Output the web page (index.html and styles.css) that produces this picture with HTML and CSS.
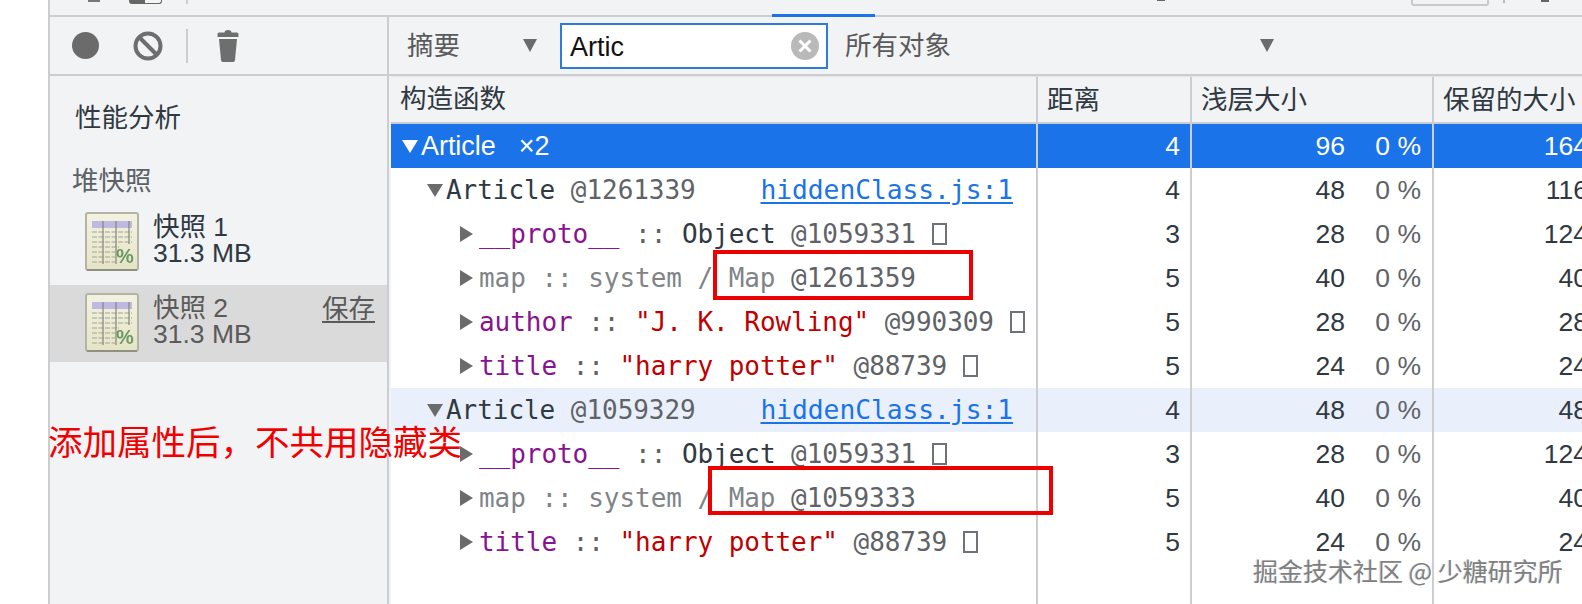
FILE: index.html
```html
<!DOCTYPE html>
<html lang="zh">
<head>
<meta charset="utf-8">
<title>堆快照</title>
<link rel="stylesheet" href="styles.css">
</head>
<body>
<svg class="defs" width="0" height="0" aria-hidden="true">
  <defs>
    <linearGradient id="paper" x1="0" y1="0" x2="0" y2="1">
      <stop offset="0" stop-color="#f3f2e2"/>
      <stop offset="1" stop-color="#e6e4c6"/>
    </linearGradient>
    <symbol id="snap" viewBox="0 0 54 60">
      <rect x="1" y="1" width="52" height="57" rx="2" fill="url(#paper)" stroke="#b4b4a6" stroke-width="2"/>
      <path d="M2 58H52" stroke="#8f8f82" stroke-width="2"/>
      <rect x="7" y="9" width="40" height="7" fill="#bdb9e2"/>
      <g stroke="#a3a394" stroke-width="1" stroke-dasharray="5 1.500">
        <path d="M7 20H47M7 25H47M7 30H47M7 35H34M7 40H30M7 45H30M7 50H30"/>
      </g>
      <g stroke="#85857a" stroke-width="1.200">
        <path d="M18 9V52M31 9V52M44 9V32"/>
      </g>
      <text x="40" y="51" class="pct" text-anchor="middle">%</text>
    </symbol>
  </defs>
</svg>
<div class="app">
  <div class="topstrip">
    <span class="frag frag-a"></span>
    <span class="frag frag-b"></span>
    <span class="frag frag-c"></span>
    <span class="frag frag-tab"></span>
    <span class="frag frag-d"></span>
    <span class="frag frag-e"></span>
    <span class="frag frag-f"></span>
    <span class="frag frag-g"></span>
  </div>
  <div class="workspace">
    <aside class="sidebar">
      <div class="side-tools">
        <span class="record"></span>
        <svg class="ban" viewBox="0 0 30 30" width="30" height="30"><circle cx="15" cy="15" r="12.5" fill="none" stroke="#6e6e6e" stroke-width="4"/><path d="M6.5 6.5L23.5 23.5" stroke="#6e6e6e" stroke-width="4"/></svg>
        <span class="tool-sep"></span>
        <svg class="trash" viewBox="0 0 22 32" width="22" height="32"><path d="M7.5 2.5a3.5 2.5 0 0 1 7 0H20a1.5 2 0 0 1 1.500 2V7H.5V4.500A1.500 2 0 0 1 2 2.500z" fill="#6e6e6e"/><path d="M2 9H20L18 30a2 2 0 0 1-2 2H6a2 2 0 0 1-2-2z" fill="#6e6e6e"/></svg>
      </div>
      <div class="side-title">性能分析</div>
      <div class="side-group">堆快照</div>
      <div class="snapshot">
        <svg class="snap-icon"><use href="#snap"/></svg>
        <div class="snap-text"><div>快照 1</div><div>31.3 MB</div></div>
      </div>
      <div class="snapshot selected">
        <svg class="snap-icon"><use href="#snap"/></svg>
        <div class="snap-text"><div>快照 2</div><div>31.3 MB</div></div>
        <span class="save">保存</span>
      </div>
    </aside>
    <main class="content">
      <div class="filters">
        <span class="select-label">摘要</span>
        <span class="caret caret-a"></span>
        <div class="search">
          <span>Artic</span>
          <svg class="clear" viewBox="0 0 28 28" width="28" height="28"><circle cx="14" cy="14" r="14" fill="#b9b9b9"/><path d="M8.500 8.500L19.500 19.500M19.500 8.500L8.500 19.500" stroke="#fff" stroke-width="3"/></svg>
        </div>
        <span class="select-label wide">所有对象</span>
        <span class="caret caret-b"></span>
      </div>
      <div class="grid">
        <div class="row head">
          <div class="cell name">构造函数</div>
          <div class="cell">距离</div>
          <div class="cell">浅层大小</div>
          <div class="cell">保留的大小</div>
        </div>
        <div class="row sel">
          <div class="cell name lvl1"><i class="tri open"></i><span class="sans">Article</span><span class="sans count">×2</span></div>
          <div class="cell num">4</div>
          <div class="cell num size"><span>96</span><span class="pc">0 %</span></div>
          <div class="cell num ret">164</div>
        </div>
        <div class="row">
          <div class="cell name lvl2"><i class="tri open"></i><span class="dark">Article</span>&nbsp;<span class="id">@1261339</span><a class="src">hiddenClass.js:1</a></div>
          <div class="cell num">4</div>
          <div class="cell num size"><span>48</span><span class="pc">0 %</span></div>
          <div class="cell num ret">116</div>
        </div>
        <div class="row">
          <div class="cell name lvl3"><i class="tri shut"></i><span class="key">__proto__</span>&nbsp;<span class="id">::</span>&nbsp;<span class="dark">Object</span>&nbsp;<span class="id">@1059331</span>&nbsp;<i class="tofu"></i></div>
          <div class="cell num">3</div>
          <div class="cell num size"><span>28</span><span class="pc">0 %</span></div>
          <div class="cell num ret">124</div>
        </div>
        <div class="row">
          <div class="cell name lvl3"><i class="tri shut"></i><span class="sys">map :: system / Map</span>&nbsp;<span class="id">@1261359</span></div>
          <div class="cell num">5</div>
          <div class="cell num size"><span>40</span><span class="pc">0 %</span></div>
          <div class="cell num ret">40</div>
        </div>
        <div class="row">
          <div class="cell name lvl3"><i class="tri shut"></i><span class="key">author</span>&nbsp;<span class="id">::</span>&nbsp;<span class="str">"J. K. Rowling"</span>&nbsp;<span class="id">@990309</span>&nbsp;<i class="tofu"></i></div>
          <div class="cell num">5</div>
          <div class="cell num size"><span>28</span><span class="pc">0 %</span></div>
          <div class="cell num ret">28</div>
        </div>
        <div class="row">
          <div class="cell name lvl3"><i class="tri shut"></i><span class="key">title</span>&nbsp;<span class="id">::</span>&nbsp;<span class="str">"harry potter"</span>&nbsp;<span class="id">@88739</span>&nbsp;<i class="tofu"></i></div>
          <div class="cell num">5</div>
          <div class="cell num size"><span>24</span><span class="pc">0 %</span></div>
          <div class="cell num ret">24</div>
        </div>
        <div class="row tint">
          <div class="cell name lvl2"><i class="tri open"></i><span class="dark">Article</span>&nbsp;<span class="id">@1059329</span><a class="src">hiddenClass.js:1</a></div>
          <div class="cell num">4</div>
          <div class="cell num size"><span>48</span><span class="pc">0 %</span></div>
          <div class="cell num ret">48</div>
        </div>
        <div class="row">
          <div class="cell name lvl3"><i class="tri shut"></i><span class="key">__proto__</span>&nbsp;<span class="id">::</span>&nbsp;<span class="dark">Object</span>&nbsp;<span class="id">@1059331</span>&nbsp;<i class="tofu"></i></div>
          <div class="cell num">3</div>
          <div class="cell num size"><span>28</span><span class="pc">0 %</span></div>
          <div class="cell num ret">124</div>
        </div>
        <div class="row">
          <div class="cell name lvl3"><i class="tri shut"></i><span class="sys">map :: system / Map</span>&nbsp;<span class="id">@1059333</span></div>
          <div class="cell num">5</div>
          <div class="cell num size"><span>40</span><span class="pc">0 %</span></div>
          <div class="cell num ret">40</div>
        </div>
        <div class="row">
          <div class="cell name lvl3"><i class="tri shut"></i><span class="key">title</span>&nbsp;<span class="id">::</span>&nbsp;<span class="str">"harry potter"</span>&nbsp;<span class="id">@88739</span>&nbsp;<i class="tofu"></i></div>
          <div class="cell num">5</div>
          <div class="cell num size"><span>24</span><span class="pc">0 %</span></div>
          <div class="cell num ret">24</div>
        </div>
        <div class="row filler">
          <div class="cell name"></div>
          <div class="cell"></div>
          <div class="cell"></div>
          <div class="cell"></div>
        </div>
      </div>
    </main>
  </div>
</div>
<div class="note">添加属性后，不共用隐藏类</div>
<div class="redbox box-one"></div>
<div class="redbox box-two"></div>
<div class="watermark">掘金技术社区 @ 少糖研究所</div>
</body>
</html>
```
FILE: styles.css
```css
* { box-sizing: border-box; }
html, body { margin: 0; height: 100%; }
body {
  position: relative;
  width: 1582px;
  height: 604px;
  overflow: hidden;
  background: #fff;
  padding-left: 48px;
  font: 26.500px/1.2 "Liberation Sans", "Noto Sans CJK SC", sans-serif;
  color: #303942;
}
.defs { position: absolute; }
.pct { font: bold 20px "Liberation Sans", sans-serif; fill: #6a9a66; }

.app {
  height: 604px;
  display: flex;
  flex-direction: column;
  border-left: 2px solid #cbcdd0;
  background: #f1f3f5;
}
.topstrip {
  height: 17px;
  flex: none;
  display: flex;
  align-items: flex-start;
  border-bottom: 2px solid #cbcdd0;
}
.frag { display: block; flex: none; }
.frag-a { width: 12px; height: 2px; margin-left: 38px; background: #777; }
.frag-b { width: 33px; height: 4px; margin-left: 29px; border-radius: 0 0 3px 3px; background: linear-gradient(90deg, #666 0 50%, #f4f4f4 50%); border: 1px solid #666; border-top: 0; }
.frag-c { width: 2px; height: 4px; margin-left: 24px; background: #ccc; }
.frag-tab { width: 103px; height: 3px; margin-left: 584px; margin-top: 14px; background: #1a73e8; }
.frag-d { width: 8px; height: 1px; margin-left: 282px; background: #666; }
.frag-e { width: 78px; height: 6px; margin-left: 246px; border: 2px solid #c9c9c9; border-top: 0; border-radius: 0 0 3px 3px; }
.frag-f { width: 2px; height: 3px; margin-left: 14px; background: #bbb; }
.frag-g { width: 8px; height: 2px; margin-left: 36px; background: #666; }

.workspace { flex: 1; display: flex; min-height: 0; }

.sidebar {
  width: 339px;
  flex: none;
  border-right: 2px solid #cbcdd0;
}
.side-tools {
  height: 59px;
  display: flex;
  align-items: center;
  border-bottom: 2px solid #cbcdd0;
  padding-left: 22px;
}
.record { width: 27px; height: 27px; border-radius: 50%; background: #6b6b6b; margin-top: -1px; }
.ban { margin-left: 34px; margin-top: 1px; }
.tool-sep { width: 2px; height: 34px; background: #cbcdd0; margin-left: 23px; }
.trash { margin-left: 29px; }

.side-title { margin: 25px 0 0 25px; line-height: 34px; }
.side-group { margin: 29px 0 6px 22px; line-height: 34px; color: #5c6166; }
.snapshot {
  height: 81px;
  display: flex;
  align-items: flex-start;
  padding: 8px 12px 0 35px;
}
.snapshot.selected { height: 77px; background: #dadada; color: #5a5a5a; }
.snap-icon { width: 54px; height: 60px; flex: none; filter: blur(0.4px); }
.snap-text { margin: 3px 0 0 14px; line-height: 25.500px; }
.save { margin-left: auto; margin-top: 3px; line-height: 26px; text-decoration: underline; text-underline-offset: 3px; }

.content { flex: 1; min-width: 0; display: flex; flex-direction: column; }
.filters {
  height: 59px;
  flex: none;
  display: flex;
  align-items: center;
  border-bottom: 2px solid #cbcdd0;
  color: #5a5a5a;
  padding-left: 18px;
}
.select-label { flex: none; padding-top: 2px; }
.caret { width: 0; height: 0; flex: none; border-left: 7.500px solid transparent; border-right: 7.500px solid transparent; border-top: 13px solid #6b6b6b; }
.caret-a { margin-left: 63px; }
.caret-b { margin-left: 309px; }
.search {
  width: 268px;
  height: 46px;
  margin-left: 23px;
  flex: none;
  display: flex;
  align-items: center;
  justify-content: space-between;
  border: 2px solid #2f7bd9;
  background: #fff;
  padding: 0 7px 0 8px;
  color: #111;
  font-size: 27px;
}
.search span { padding-top: 3px; }
.wide { margin-left: 17px; }

.grid {
  flex: 1;
  min-height: 0;
  margin-left: 2px;
  display: flex;
  flex-direction: column;
  background: #fff;
  border-top: 1px solid #e4e5e7;
}
.row {
  display: grid;
  grid-template-columns: 647px 154px 242px 200px;
  height: 44px;
  flex: none;
  line-height: 44px;
}
.row.head { height: 47px; line-height: 47px; background: #f1f3f5; border-bottom: 2px solid #cbcdd0; }
.head .cell { padding-left: 9px; }
.row.sel { background: #1a73e8; color: #fff; }
.row.tint { background: #e9f0fb; }
.row.filler { flex: 1; }
.cell { border-right: 2px solid #cbcdd0; white-space: nowrap; overflow: hidden; }
.cell.name {
  display: flex;
  align-items: center;
  font-family: "DejaVu Sans Mono", monospace;
  font-size: 26px;
  letter-spacing: -0.050px;
}
.head .cell.name { font-family: "Liberation Sans", "Noto Sans CJK SC", sans-serif; font-size: 26.500px; letter-spacing: 0; }
.lvl1 { padding-left: 11px; }
.lvl2 { padding-left: 36px; }
.lvl3 { padding-left: 69px; }
.num { text-align: right; padding-right: 10px; }
.size { display: flex; justify-content: flex-end; padding-right: 11px; }
.pc { width: 76px; text-align: right; color: #5f6368; }
.sel .pc { color: #fff; }
.ret { padding-right: 46px; border-right: 0; }

.tri { display: block; width: 0; height: 0; flex: none; }
.tri.open { border-left: 8px solid transparent; border-right: 8px solid transparent; border-top: 13px solid #6b6b6b; margin-right: 3px; }
.sel .tri.open { border-top-color: #fff; margin-right: 3px; }
.tri.shut { border-top: 8px solid transparent; border-bottom: 8px solid transparent; border-left: 13px solid #6b6b6b; margin-right: 6px; }
.sans { font-family: "Liberation Sans", sans-serif; font-size: 27px; }
.count { margin-left: 23px; }
.dark { color: #303942; }
.id { color: #5f6368; }
.key { color: #881391; }
.sys { color: #808487; }
.str { color: #c00000; }
.src { margin-left: auto; margin-right: 23px; color: #1a73e8; font-size: 26.300px; text-decoration: underline; text-underline-offset: 3px; }
.tofu { display: block; width: 15px; height: 22px; border: 2px solid #6f7377; flex: none; }

.note {
  position: absolute;
  left: 48px;
  top: 419px;
  font: 34.500px/42px "Noto Sans CJK SC", sans-serif;
  color: #f00000;
  white-space: nowrap;
}
.redbox { position: absolute; border: 4px solid #ec0000; }
.box-one { left: 713px; top: 250px; width: 260px; height: 50px; }
.box-two { left: 708px; top: 466px; width: 345px; height: 49px; }
.watermark {
  position: absolute;
  left: 1253px;
  top: 554px;
  font: 25px/32px "Noto Sans CJK SC", sans-serif;
  color: #7f7f7f;
  text-shadow: 1px 1px 1px #fff, -1px 0 1px #d8d8d8;
  white-space: nowrap;
}
```
